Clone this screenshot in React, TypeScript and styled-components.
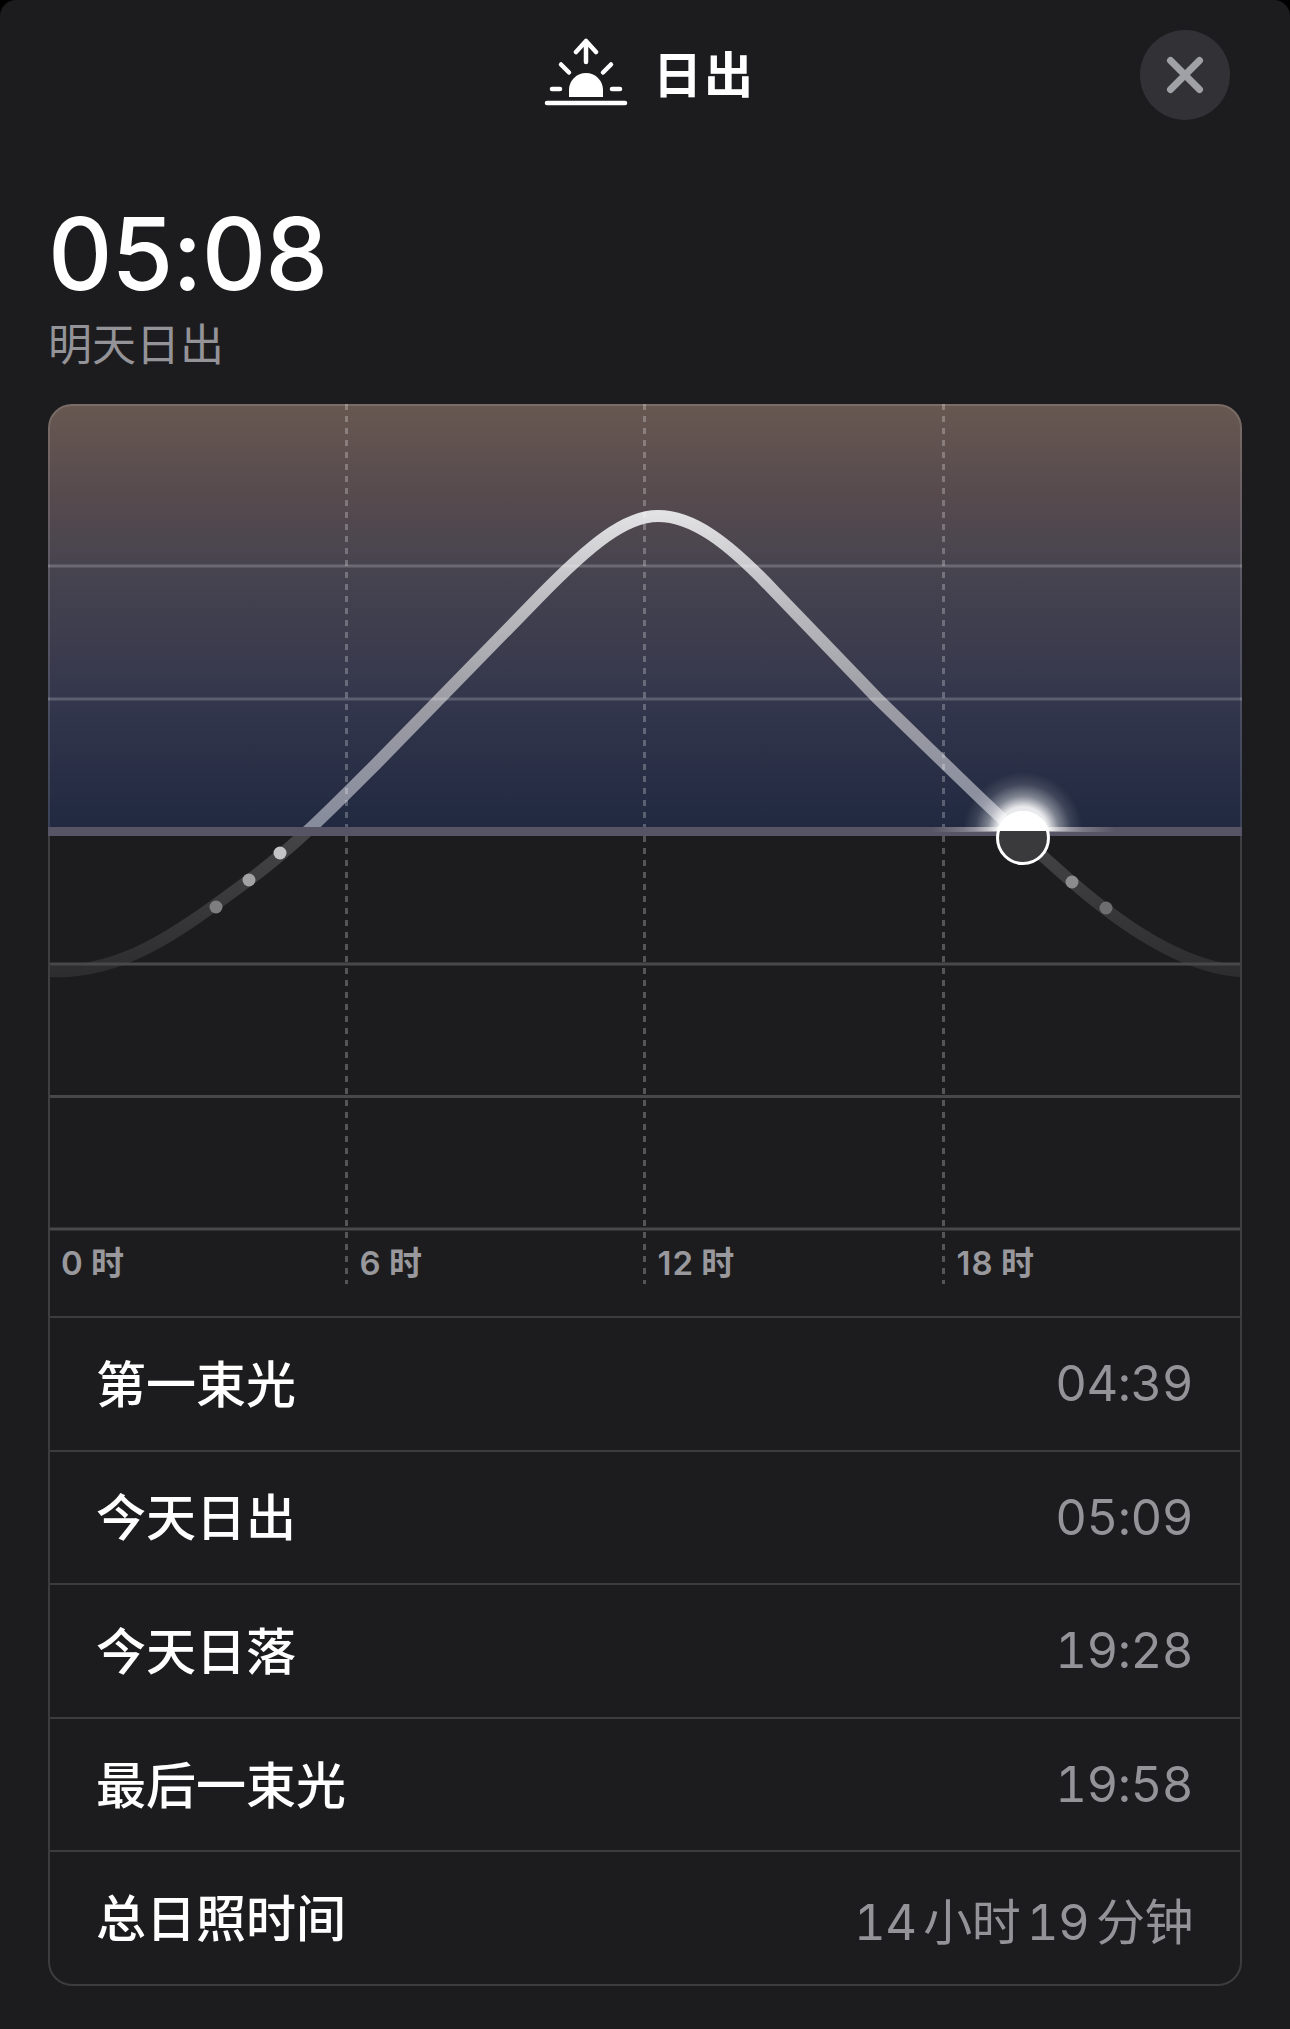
import React from 'react';
import styled, { createGlobalStyle } from 'styled-components';

const GlobalStyle = createGlobalStyle`
  html, body {
    margin: 0;
    padding: 0;
    background: #000;
  }
`;

const CJK = `Inter, "Noto Sans CJK SC", sans-serif`;

const rows = [
  { label: '第一束光', value: '04:39' },
  { label: '今天日出', value: '05:09' },
  { label: '今天日落', value: '19:28' },
  { label: '最后一束光', value: '19:58' },
  { label: '总日照时间', value: '14 小时 19 分钟' },
];

const skyLines = [566, 699];
const groundLines = [964, 1096.5, 1229];
const hours = [
  { x: 48, dash: 0, label: '0 时' },
  { x: 346.5, dash: 1, label: '6 时' },
  { x: 644.5, dash: 1, label: '12 时' },
  { x: 943.5, dash: 1, label: '18 时' },
];
const dots = [
  { x: 280, y: 853, fill: '#c4c4c6' },
  { x: 249, y: 880, fill: '#a2a2a4' },
  { x: 216, y: 907, fill: '#7e7e80' },
  { x: 1072, y: 882, fill: '#8c8c8e' },
  { x: 1106, y: 908, fill: '#6e6e70' },
];

const curve =
  'M48 971 C120 975 175 935 249 880 C295 846 330 810 377 763 L540 596 C590 545 625 516 658 516 C692 516 727 541 775 592 L877 698 L943 762 C975 793 1010 828 1072 882 C1125 928 1185 968 1241 971';

const SunChart = () => (
  <ChartSvg viewBox="48 404 1194 912">
    <defs>
      <linearGradient id="sky" x1="0" y1="0" x2="0" y2="1">
        <stop offset="0" stopColor="#685851" />
        <stop offset="0.22" stopColor="#564a4e" />
        <stop offset="0.38" stopColor="#47444f" />
        <stop offset="0.7" stopColor="#33364c" />
        <stop offset="1" stopColor="#202940" />
      </linearGradient>
      <linearGradient id="arc" gradientUnits="userSpaceOnUse" x1="0" y1="512" x2="0" y2="830">
        <stop offset="0" stopColor="#e2e2e4" />
        <stop offset="0.28" stopColor="#bcbcc1" />
        <stop offset="0.6" stopColor="#9c9ca4" />
        <stop offset="1" stopColor="#868b9c" />
      </linearGradient>
      <linearGradient id="arcLow" gradientUnits="userSpaceOnUse" x1="0" y1="831" x2="0" y2="975">
        <stop offset="0" stopColor="#454547" />
        <stop offset="1" stopColor="#2d2d2f" />
      </linearGradient>
      <linearGradient id="shine" x1="0" y1="0" x2="1" y2="0">
        <stop offset="0" stopColor="#fff" stopOpacity="0" />
        <stop offset="0.5" stopColor="#fff" stopOpacity="0.6" />
        <stop offset="1" stopColor="#fff" stopOpacity="0" />
      </linearGradient>
      <radialGradient id="glow">
        <stop offset="0.42" stopColor="#fff" stopOpacity="0.9" />
        <stop offset="0.6" stopColor="#fff" stopOpacity="0.42" />
        <stop offset="0.8" stopColor="#fff" stopOpacity="0.12" />
        <stop offset="1" stopColor="#fff" stopOpacity="0" />
      </radialGradient>
      <clipPath id="above">
        <rect x="48" y="404" width="1194" height="427" />
      </clipPath>
      <clipPath id="below">
        <rect x="48" y="831" width="1194" height="200" />
      </clipPath>
      <clipPath id="sunTop">
        <rect x="990" y="800" width="70" height="31" />
      </clipPath>
    </defs>

    <path d="M48 831 V428 A24 24 0 0 1 72 404 H1218 A24 24 0 0 1 1242 428 V831 Z" fill="url(#sky)" />
    <path d="M49 831 V428 A23 23 0 0 1 72 405 H1218 A23 23 0 0 1 1241 428 V831" fill="none" stroke="#fff" strokeOpacity="0.12" strokeWidth="2" />

    <path d={curve} fill="none" stroke="url(#arcLow)" strokeWidth="12" clipPath="url(#below)" />
    <path d={curve} fill="none" stroke="url(#arc)" strokeWidth="12" clipPath="url(#above)" />

    {skyLines.map((y) => (
      <line key={y} x1="48" x2="1242" y1={y} y2={y} stroke="#fff" strokeOpacity="0.2" strokeWidth="3" />
    ))}
    {groundLines.map((y) => (
      <line key={y} x1="48" x2="1242" y1={y} y2={y} stroke="#48484a" strokeWidth="3" />
    ))}
    <path d="M49 831 V1316 M1241 831 V1316" stroke="#3f3f41" strokeWidth="2" fill="none" />

    {hours
      .filter((h) => h.dash)
      .map((h) => (
        <line
          key={h.x}
          x1={h.x}
          x2={h.x}
          y1="404"
          y2="1284"
          stroke="#fff"
          strokeOpacity="0.25"
          strokeWidth="3"
          strokeDasharray="6 6"
        />
      ))}

    <rect x="48" y="827" width="1194" height="9" fill="#565465" />

    {dots.map((d) => (
      <circle key={d.x} cx={d.x} cy={d.y} r="6.5" fill={d.fill} />
    ))}

    <circle cx="1023" cy="832" r="60" fill="url(#glow)" clipPath="url(#above)" />
    <rect x="930" y="827" width="186" height="5" fill="url(#shine)" />
    <circle cx="1023" cy="838" r="25.5" fill="#3a3a3c" stroke="#fff" strokeWidth="3" />
    <circle cx="1023" cy="838" r="27" fill="#fff" clipPath="url(#sunTop)" />

    {hours.map((h) => (
      <AxisLabel key={h.label} x={h.x + 13} y="1275">
        {h.label}
      </AxisLabel>
    ))}
  </ChartSvg>
);

const App = () => (
  <>
    <GlobalStyle />
    <Sheet>
      <Header>
        <span />
        <TitleGroup>
          <SunIcon width="86" height="68" viewBox="0 0 86 68" fill="none" stroke="#fff" strokeLinecap="round">
            <path d="M43 24 V3 M33 14 L43 3 L53 14" strokeWidth="4.5" strokeLinejoin="round" />
            <path d="M18 26.5 L26 34.5 M68 26.5 L60 34.5" strokeWidth="4.5" />
            <path d="M9 51 H17 M69 51 H77" strokeWidth="4.5" />
            <path d="M26 59 V52 A17 17 0 0 1 60 52 V59 Z" fill="#fff" stroke="none" />
            <path d="M4 65 H82" strokeWidth="4.5" />
          </SunIcon>
          <TitleText>日出</TitleText>
        </TitleGroup>
        <CloseButton>
          <svg width="40" height="40" viewBox="0 0 40 40" fill="none" stroke="#a0a0a7" strokeWidth="7" strokeLinecap="round">
            <path d="M5.5 5.5 L34.5 34.5 M34.5 5.5 L5.5 34.5" />
          </svg>
        </CloseButton>
      </Header>

      <Summary>
        <TimeText>05:08</TimeText>
        <Caption>明天日出</Caption>
      </Summary>

      <SunChart />

      <Table>
        {rows.map((r) => (
          <Row key={r.label}>
            <RowLabel>{r.label}</RowLabel>
            <RowValue>{r.value}</RowValue>
          </Row>
        ))}
      </Table>
    </Sheet>
  </>
);

const Sheet = styled.div`
  width: 1290px;
  height: 2029px;
  box-sizing: border-box;
  padding: 30px 48px 0;
  background: #1c1c1e;
  border-radius: 16px 16px 0 0;
  font-family: ${CJK};
  overflow: hidden;
`;

const Header = styled.div`
  display: grid;
  grid-template-columns: 1fr auto 1fr;
  align-items: center;
  height: 90px;
  padding: 0 12px 0 20px;
`;

const TitleGroup = styled.div`
  display: flex;
  align-items: center;
  gap: 24px;
`;

const SunIcon = styled.svg`
  margin-bottom: 6px;
`;

const TitleText = styled.span`
  font-size: 49px;
  font-weight: 600;
  letter-spacing: 2px;
  line-height: 60px;
  margin-top: 2px;
  color: #fff;
`;

const CloseButton = styled.div`
  justify-self: end;
  width: 90px;
  height: 90px;
  border-radius: 50%;
  background: #323236;
  display: flex;
  align-items: center;
  justify-content: center;
`;

const Summary = styled.div`
  display: flex;
  flex-direction: column;
  margin-top: 79px;
  height: 205px;
`;

const TimeText = styled.div`
  font-size: 100px;
  font-weight: 500;
  letter-spacing: -1px;
  line-height: 110px;
  color: #fff;
`;

const Caption = styled.div`
  font-size: 44px;
  line-height: 56px;
  margin-top: 8px;
  color: #939398;
`;

const ChartSvg = styled.svg`
  display: block;
  width: 1194px;
  height: 912px;
`;

const AxisLabel = styled.text`
  font-family: ${CJK};
  font-size: 33px;
  font-weight: 600;
  letter-spacing: 1px;
  word-spacing: -2px;
  fill: #98989d;
`;

const Table = styled.div`
  height: 670px;
  box-sizing: border-box;
  display: flex;
  flex-direction: column;
  border: 2px solid #3c3c3e;
  border-radius: 0 0 24px 24px;
`;

const Row = styled.div`
  flex: 1;
  display: flex;
  align-items: center;
  justify-content: space-between;
  padding: 0 47px 0 46px;
  & + & {
    border-top: 2px solid #3c3c3e;
  }
`;

const RowLabel = styled.span`
  font-size: 50px;
  font-weight: 500;
  margin-bottom: 6px;
  color: #fff;
`;

const RowValue = styled.span`
  font-size: 49px;
  font-weight: 400;
  font-variant-numeric: tabular-nums;
  letter-spacing: -0.5px;
  word-spacing: -6px;
  color: #939398;
`;

export default App;
